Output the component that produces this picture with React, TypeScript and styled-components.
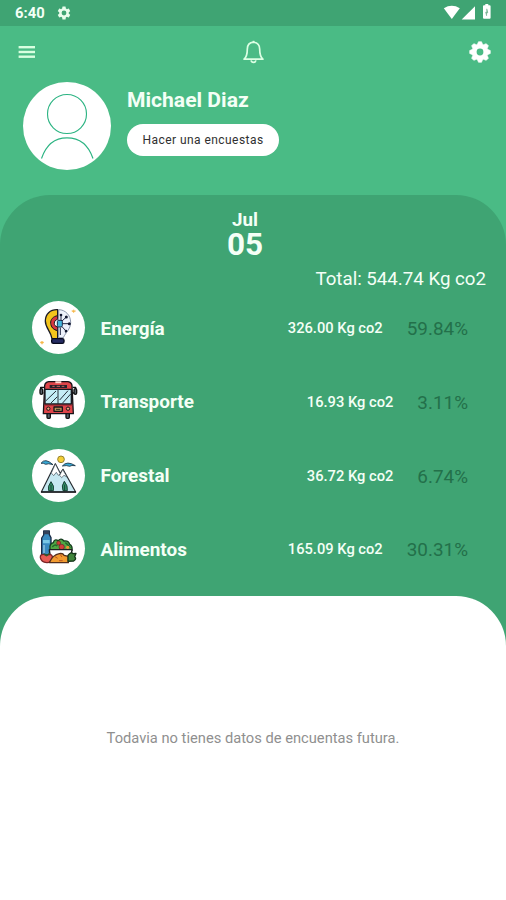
import React from 'react';
import styled, { createGlobalStyle } from 'styled-components';

const GlobalStyle = createGlobalStyle`
  * { box-sizing: border-box; }
  html, body { margin: 0; padding: 0; }
  body { font-family: Roboto, 'Liberation Sans', sans-serif; background: #fff; }
  svg { display: block; flex: none; }
`;

const Screen = styled.main`
  width: 506px;
  height: 900px;
  display: flex;
  flex-direction: column;
  background: #4abb85;
  overflow: hidden;
`;

const StatusBar = styled.header`
  height: 26px;
  flex: none;
  display: flex;
  align-items: center;
  padding: 0 14px 0 15px;
  background: #3fa473;
  color: #f4fff6;
`;

const Clock = styled.span`
  font-size: 14.8px;
  font-weight: 700;
  line-height: 26px;
  width: 41px;
`;

const StatusIcons = styled.div`
  margin-left: auto;
  display: flex;
  align-items: center;
`;

const TopBar = styled.nav`
  height: 52px;
  flex: none;
  display: grid;
  grid-template-columns: 1fr auto 1fr;
  align-items: center;
  padding: 0 15px 0 17px;
`;

const IconButton = styled.button<{ $align: 'start' | 'center' | 'end' }>`
  all: unset;
  justify-self: ${({ $align }) => $align};
`;

const Profile = styled.section`
  height: 117px;
  flex: none;
  display: flex;
  padding: 4px 23px 0;
  gap: 16px;
`;

const Avatar = styled.div`
  width: 88px;
  height: 88px;
  border-radius: 50%;
  overflow: hidden;
  background: #fff;
`;

const ProfileInfo = styled.div`
  display: flex;
  flex-direction: column;
  align-items: flex-start;
  padding-top: 6px;
`;

const Name = styled.h1`
  margin: 0;
  font-size: 21.1px;
  font-weight: 700;
  line-height: 24px;
  color: #f4fff6;
  white-space: nowrap;
`;

const SurveyButton = styled.button`
  margin: 12px 0 0;
  width: 152px;
  height: 32px;
  padding: 0;
  border: 0;
  border-radius: 16px;
  background: #fff;
  color: #303030;
  font: 400 12px/32px Roboto, sans-serif;
  letter-spacing: 0.45px;
  white-space: nowrap;
`;

const Summary = styled.section`
  flex: 1;
  display: flex;
  flex-direction: column;
  border-radius: 50px 50px 0 0;
  background: #3fa473;
  color: #f4fff6;
`;

const DateBlock = styled.div`
  padding-top: 14px;
  padding-right: 16px;
  height: 69px;
  text-align: center;
  font-weight: 700;
`;

const Month = styled.div`
  font-size: 18.8px;
  line-height: 22px;
`;

const Day = styled.div`
  font-size: 31.5px;
  line-height: 27px;
`;

const Total = styled.div`
  padding-right: 20px;
  height: 31px;
  text-align: right;
  font-size: 18.7px;
  line-height: 31px;
`;

const CategoryList = styled.ul`
  list-style: none;
  margin: 0;
  padding: 6px 38px 0 32px;
  height: 301px;
  display: flex;
  flex-direction: column;
  gap: 20.8px;
`;

const Category = styled.li`
  height: 53px;
  display: flex;
  align-items: center;
`;

const CategoryIcon = styled.div`
  width: 53px;
  height: 53px;
  border-radius: 50%;
  background: #fff;
  overflow: hidden;
`;

const CategoryName = styled.span`
  margin-left: 15.5px;
  padding-top: 1px;
  font-size: 18.9px;
  font-weight: 700;
`;

const Amount = styled.span`
  margin-left: auto;
  padding-top: 1px;
  font-size: 14.7px;
  font-weight: 500;
`;

const Percent = styled.span`
  margin-left: 24px;
  padding-top: 2px;
  font-size: 18.9px;
  color: #23704a;
`;

const Upcoming = styled.section`
  flex: 1;
  display: flex;
  justify-content: center;
  padding-top: 131px;
  border-radius: 50px 50px 0 0;
  background: #fff;
`;

const EmptyText = styled.p`
  margin: 0;
  font-size: 14.7px;
  line-height: 22px;
  color: #8f8f8f;
  white-space: nowrap;
`;

const GEAR =
  'M19.14 12.94c.04-.3.06-.61.06-.94s-.02-.64-.07-.94l2.03-1.58a.49.49 0 0 0 .12-.61l-1.92-3.32a.49.49 0 0 0-.59-.22l-2.39.96a7 7 0 0 0-1.62-.94l-.36-2.54a.48.48 0 0 0-.48-.41h-3.84a.47.47 0 0 0-.47.41l-.36 2.54c-.59.24-1.13.57-1.62.94l-2.39-.96a.48.48 0 0 0-.59.22L2.74 8.87a.47.47 0 0 0 .12.61l2.03 1.58c-.05.3-.09.63-.09.94s.02.64.07.94l-2.03 1.58a.49.49 0 0 0-.12.61l1.92 3.32c.12.22.37.29.59.22l2.39-.96c.5.38 1.03.7 1.62.94l.36 2.54c.05.24.24.41.48.41h3.84c.24 0 .44-.17.47-.41l.36-2.54a7 7 0 0 0 1.62-.94l2.39.96c.22.08.47 0 .59-.22l1.92-3.32a.47.47 0 0 0-.12-.61zM12 15.6a3.6 3.6 0 1 1 0-7.2 3.6 3.6 0 0 1 0 7.2z';

const StatusGear = () => (
  <svg width="16" height="16" viewBox="0 0 24 24" fill="#e9fdec">
    <path d={GEAR} />
  </svg>
);

const SignalGlyphs = () => (
  <svg width="49" height="26" viewBox="0 0 49 26" fill="#fff">
    <path d="M0.8 8.2Q8.8 3.400 16.800 8.200L8.800 19Z" />
    <path d="M32 6.200V19.500H18.700Z" />
    <path d="M41 5.200h1.300V4h3v1.200h1.300q1 0 1 1v11.500q0 1-1 1H41q-1 0-1-1V6.200q0-1 1-1z" />
    <path d="M43.800 8.800v3.400h-1.200l1 3.600v-3h1.200z" fill="#68a986" stroke="#68a986" strokeWidth=".5" />
  </svg>
);

const MenuGlyph = () => (
  <svg width="19" height="14" viewBox="0 0 19 14" fill="#d9ffe0">
    <rect x="1.600" y="1" width="16.400" height="2.400" />
    <rect x="1.600" y="5.800" width="16.400" height="2.400" />
    <rect x="1.600" y="10.500" width="16.400" height="2.400" />
  </svg>
);

const BellGlyph = () => (
  <svg width="22" height="24" viewBox="0.5 0 22 24" fill="none" stroke="#dcffe4" strokeWidth="1.700" strokeLinejoin="round">
    <path d="M11 2.200C7 2.600 4.800 5.600 4.800 9.200C4.800 14.500 3.800 17.200 1.600 19.200H20.400C18.200 17.200 17.200 14.500 17.200 9.200C17.200 5.600 15 2.600 11 2.200Z" />
    <path d="M8.600 20.400Q9 22.400 11 22.400Q13 22.400 13.400 20.400" />
    <path d="M11 .8v1.400" />
  </svg>
);

const SettingsGlyph = () => (
  <svg width="22" height="22" viewBox="-11 -11 22 22">
    <g fill="#fff">
      {[0, 45, 90, 135, 180, 225, 270, 315].map((angle) => (
        <path key={angle} transform={`rotate(${angle})`} d="M-2.900-7L-1.500-10.300H1.500L2.900-7Z" stroke="#fff" strokeWidth=".6" strokeLinejoin="round" />
      ))}
      <circle r="7.700" />
    </g>
    <circle r="3.400" fill="#4abb85" />
  </svg>
);

const PersonGlyph = () => (
  <svg width="88" height="88" viewBox="0 0 88 88" fill="none" stroke="#2db483" strokeWidth="1.150">
    <circle cx="44" cy="32" r="19.500" />
    <path d="M18.500 76.500C23 63 32 55.800 44 55.800S65.500 63 70 76.500" />
  </svg>
);

const EnergyArt = () => (
  <svg width="53" height="53" viewBox="12 12 159 159" strokeLinejoin="round">
    <path d="M89 38C66 37 52 52 52 72C52 93 68 101 72 125H89V100C76 96 70 88 71 79C72 69 79 62 89 61Z" fill="#f4c51c" stroke="#1b1a24" strokeWidth="4" />
    <path d="M89 56C75 58 67 68 68 79C69 90 76 98 89 101V90C81 88 79 84 79 79C79 73 82 69 89 67Z" fill="#d9373e" stroke="#1b1a24" strokeWidth="3" />
    <path d="M92 38C112 38 128 55 128 76C128 97 113 106 106 122H92Z" fill="#eef2fb" stroke="#77839a" strokeWidth="2.500" />
    <rect x="88" y="70" width="15" height="20" rx="4" fill="#44b6dc" stroke="#1b2a4c" strokeWidth="3" />
    <g stroke="#242b46" strokeWidth="3" fill="none">
      <path d="M103 80H122M99 69V56M102 72L114 61M102 89L113 101V107M97 92V114" />
    </g>
    <g fill="#11172f">
      <circle cx="99" cy="54" r="4" />
      <circle cx="115" cy="60" r="4.500" />
      <circle cx="124" cy="80" r="4.500" />
      <circle cx="114" cy="102" r="4" />
    </g>
    <rect x="71" y="125" width="37" height="14" rx="5" fill="#252b62" stroke="#070a1d" strokeWidth="4" />
    <g fill="#f7b84b" stroke="#f7b84b" strokeWidth="1.500">
      <path d="M137 38l2 3 4 1-4 2-2 3-2-3-4-2 4-1zM42 132l2 3 4 1-4 3-2 3-2-3-4-3 4-1z" />
    </g>
  </svg>
);

const BusArt = () => (
  <svg width="53" height="53" viewBox="12 12 159 159" strokeLinejoin="round">
    <g fill="#59636d" stroke="#111" strokeWidth="4">
      <path d="M48 49H38V66H46M134 49H143V66H135" fill="none" />
      <rect x="36" y="53" width="8" height="17" rx="4" />
      <rect x="138" y="53" width="8" height="17" rx="4" />
      <rect x="57" y="124" width="10" height="18" rx="3" />
      <rect x="114" y="124" width="10" height="18" rx="3" />
    </g>
    <path d="M50 44Q51 34 62 32H120Q131 34 132 44L136 128H46Z" fill="#df4449" stroke="#171318" strokeWidth="4" />
    <path d="M82 31H100V37H82Z" fill="#ffd5ce" />
    <rect x="65" y="42" width="52" height="9" fill="#27212a" />
    <path d="M73 46h7m6 0h10m5 0h8" stroke="#c76562" strokeWidth="3" />
    <rect x="51" y="55" width="79" height="44" fill="#c5edf6" stroke="#171a20" strokeWidth="4" />
    <path d="M90 55V99M53 90L84 60M68 97L88 77M95 87L120 59M103 97L128 69" stroke="#263039" strokeWidth="3" />
    <path d="M49 103H133" stroke="#a72d35" strokeWidth="3" />
    <rect x="78" y="108" width="25" height="13" fill="#bd9458" stroke="#171318" strokeWidth="4" />
    <path d="M84 115h13" stroke="#2b2420" strokeWidth="3" />
    <circle cx="61" cy="113" r="5" fill="#f0a47b" stroke="#171318" strokeWidth="3" />
    <circle cx="120" cy="113" r="5" fill="#f0a47b" stroke="#171318" strokeWidth="3" />
  </svg>
);

const ForestArt = () => (
  <svg width="53" height="53" viewBox="12 12 159 159" strokeLinejoin="round">
    <circle cx="99" cy="43" r="10" fill="#f4cf37" stroke="#95812e" strokeWidth="3" />
    <path d="M39 55Q51 37 75 59Q60 54 53 58Q46 53 39 55Z" fill="#38a9d6" stroke="#173042" strokeWidth="2.500" />
    <path d="M103 63Q117 46 142 62Q130 60 125 64Q116 60 103 63Z" fill="#38a9d6" stroke="#173042" strokeWidth="2.500" />
    <path d="M94 89L105 73L143 141H40L82 56L99 89" fill="#c6e8f1" stroke="#272c31" strokeWidth="3.500" />
    <path d="M82 57L97 87L91 91L85 82L77 92L70 84Z" fill="#fff" stroke="#3c4852" strokeWidth="2" />
    <path d="M104 74L117 96L108 91L101 98L95 91Z" fill="#fff" stroke="#3c4852" strokeWidth="2" />
    <path d="M69 110Q80 123 76 137H62Q58 124 69 110ZM109 109Q120 122 118 137H105Q99 122 109 109Z" fill="#34966b" stroke="#163f34" strokeWidth="3" />
    <path d="M69 119V139M110 119V139" stroke="#173f34" strokeWidth="3" />
    <path d="M39 141H144" stroke="#17191c" strokeWidth="4" />
  </svg>
);

const FoodArt = () => (
  <svg width="53" height="53" viewBox="12 12 159 159" strokeLinejoin="round">
    <path d="M47 39H64V50L69 59V111H41V60L47 51Z" fill="#398ac0" stroke="#182b46" strokeWidth="4" />
    <path d="M47 40H64V49H47Z" fill="#34415a" />
    <path d="M45 66H65V76H45Z" fill="#79c6e4" />
    <path d="M48 81V105" stroke="#b8dded" strokeWidth="3" />
    <path d="M66 91Q64 77 76 74Q79 61 91 68Q99 58 108 69Q122 67 125 79Q134 83 132 97H66Z" fill="#50a744" stroke="#173e21" strokeWidth="4" />
    <path d="M73 87Q80 77 88 84M112 74Q119 79 127 90" fill="none" stroke="#21652b" strokeWidth="4" />
    <circle cx="92" cy="75" r="6" fill="#cf3c36" stroke="#6b2926" strokeWidth="2" />
    <circle cx="101" cy="87" r="8" fill="#d33f3b" stroke="#642426" strokeWidth="2" />
    <circle cx="119" cy="88" r="5" fill="#eb9835" />
    <path d="M64 95H132Q131 112 124 121H73Q64 110 64 95Z" fill="#fff" stroke="#202024" strokeWidth="4" />
    <path d="M37 119Q36 108 48 109L55 113L63 109Q75 109 73 121Q70 135 56 134Q40 133 37 119Z" fill="#e75b53" stroke="#7b2427" strokeWidth="4" />
    <path d="M49 107l7 6 9-7" stroke="#315c2c" strokeWidth="4" fill="none" />
    <path d="M65 132Q74 111 94 107Q105 105 108 112L121 115V134H65Z" fill="#f29b30" stroke="#542f1c" strokeWidth="4" />
    <path d="M81 116l8 5M96 109l6 8M93 128h11" stroke="#b95825" strokeWidth="3" />
    <path d="M120 112Q130 100 135 107L144 106L140 116Q147 123 137 129L120 130Z" fill="#40853c" stroke="#143419" strokeWidth="4" />
  </svg>
);

const categories = [
  { name: 'Energía', amount: '326.00 Kg co2', percent: '59.84%', art: <EnergyArt /> },
  { name: 'Transporte', amount: '16.93 Kg co2', percent: '3.11%', art: <BusArt /> },
  { name: 'Forestal', amount: '36.72 Kg co2', percent: '6.74%', art: <ForestArt /> },
  { name: 'Alimentos', amount: '165.09 Kg co2', percent: '30.31%', art: <FoodArt /> },
];

export default function App() {
  return (
    <>
      <GlobalStyle />
      <Screen>
        <StatusBar>
          <Clock>6:40</Clock>
          <StatusGear />
          <StatusIcons>
            <SignalGlyphs />
          </StatusIcons>
        </StatusBar>
        <TopBar>
          <IconButton $align="start"><MenuGlyph /></IconButton>
          <IconButton $align="center"><BellGlyph /></IconButton>
          <IconButton $align="end"><SettingsGlyph /></IconButton>
        </TopBar>
        <Profile>
          <Avatar><PersonGlyph /></Avatar>
          <ProfileInfo>
            <Name>Michael Diaz</Name>
            <SurveyButton>Hacer una encuestas</SurveyButton>
          </ProfileInfo>
        </Profile>
        <Summary>
          <DateBlock>
            <Month>Jul</Month>
            <Day>05</Day>
          </DateBlock>
          <Total>Total: 544.74 Kg co2</Total>
          <CategoryList>
            {categories.map((item) => (
              <Category key={item.name}>
                <CategoryIcon>{item.art}</CategoryIcon>
                <CategoryName>{item.name}</CategoryName>
                <Amount>{item.amount}</Amount>
                <Percent>{item.percent}</Percent>
              </Category>
            ))}
          </CategoryList>
          <Upcoming>
            <EmptyText>Todavia no tienes datos de encuentas futura.</EmptyText>
          </Upcoming>
        </Summary>
      </Screen>
    </>
  );
}
